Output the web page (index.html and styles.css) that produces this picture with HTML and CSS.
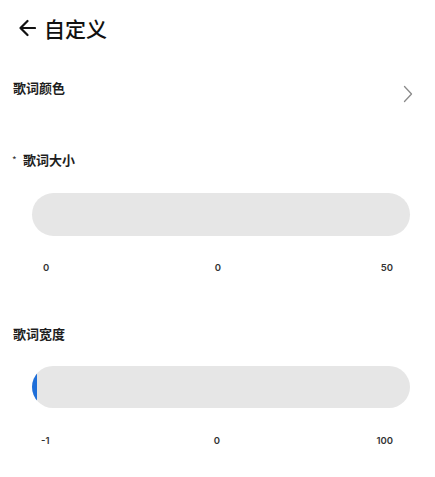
FILE: index.html
```html
<!DOCTYPE html>
<html lang="zh">
<head>
<meta charset="utf-8">
<title>自定义</title>
<link rel="stylesheet" href="styles.css">
</head>
<body>
<div class="page">
  <header class="header">
    <svg class="back" width="18" height="18" viewBox="0 0 18 18" aria-hidden="true">
      <path d="M17 9H2.5M9.5 2L2.5 9l7 7" fill="none" stroke="#111" stroke-width="2.2" stroke-linecap="round" stroke-linejoin="round"/>
    </svg>
    <h1 class="title">自定义</h1>
  </header>

  <div class="row-link">
    <span class="label">歌词颜色</span>
    <svg class="chevron" width="10" height="18" viewBox="0 0 10 18" aria-hidden="true">
      <path d="M1.5 1.5L8.5 9l-7 7.5" fill="none" stroke="#8a8a8a" stroke-width="1.3" stroke-linecap="round" stroke-linejoin="round"/>
    </svg>
  </div>

  <div class="label label-size"><span class="req">*</span>歌词大小</div>
  <div class="track track-size"></div>
  <div class="scale scale-size"><span>0</span><span>0</span><span>50</span></div>

  <div class="label label-width">歌词宽度</div>
  <div class="track track-width"><div class="fill" style="width:5px"></div></div>
  <div class="scale scale-width"><span>-1</span><span>0</span><span>100</span></div>
</div>
</body>
</html>
```

FILE: styles.css
```css
html, body {
  margin: 0;
  padding: 0;
  background: #ffffff;
}

body {
  font-family: "Noto Sans CJK SC", "Noto Sans", sans-serif;
  color: #222222;
}

.page {
  width: 435px;
}

.header {
  height: 56px;
  display: flex;
  align-items: center;
  padding-left: 18px;
  gap: 8px;
}

.back {
  display: block;
}

.title {
  margin: 0;
  font-size: 21px;
  font-weight: 500;
  line-height: 24px;
  color: #111111;
}

.row-link {
  margin-top: 23px;
  height: 30px;
  display: flex;
  justify-content: space-between;
  align-items: flex-start;
  padding-left: 13px;
  padding-right: 22px;
}

.chevron {
  display: block;
  margin-top: 6px;
}

.label {
  font-size: 13px;
  line-height: 18px;
  font-weight: 700;
  color: #1e1e1e;
}

.label-size {
  margin-top: 42px;
  padding-left: 12px;
  display: flex;
  align-items: flex-start;
}

.req {
  font-size: 10px;
  line-height: 12px;
  font-weight: 400;
  color: #333333;
  width: 11px;
  margin-top: 3px;
}

.label-width {
  margin-top: 50px;
  padding-left: 13px;
}

.track {
  margin-left: 32px;
  margin-right: 25px;
  background: #e6e6e6;
  border-radius: 22px;
  overflow: hidden;
}

.track-size {
  margin-top: 24px;
  height: 43px;
}

.track-width {
  margin-top: 23px;
  height: 42px;
}

.fill {
  height: 100%;
  background: #1f6fd9;
}

.scale {
  display: grid;
  grid-template-columns: 1fr 1fr 1fr;
  padding-left: 43px;
  padding-right: 42px;
  font-family: "Inter", "Noto Sans", sans-serif;
  font-size: 9.5px;
  line-height: 14px;
  font-weight: 600;
  color: #333333;
}

.scale span:nth-child(2) {
  text-align: center;
}

.scale span:nth-child(3) {
  text-align: right;
}

.scale-size {
  margin-top: 25px;
}

.scale-width {
  margin-top: 26px;
  padding-left: 41px;
}
```
